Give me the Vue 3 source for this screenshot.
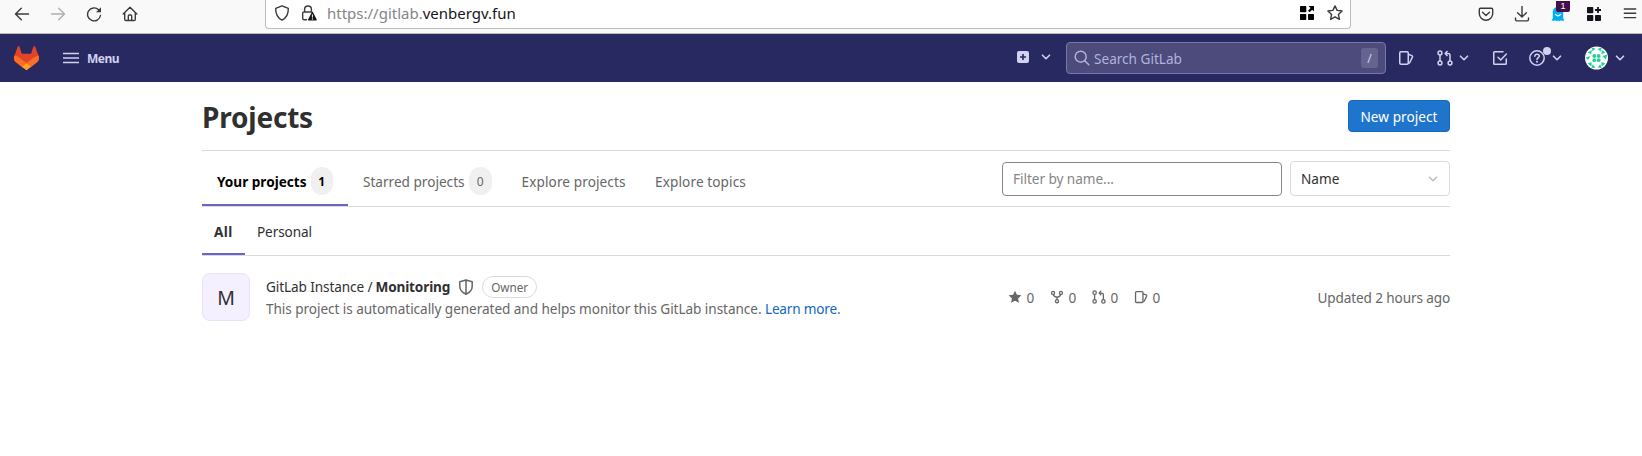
<script setup>
const tabs = [
  { label: 'Your projects', cls: 'tab-yours', count: 1, active: true },
  { label: 'Starred projects', cls: 'tab-starred', count: 0 },
  { label: 'Explore projects', cls: 'tab-explore' },
  { label: 'Explore topics', cls: 'tab-explore' },
]
const stats = [
  { icon: 'star-fill', value: 0 },
  { icon: 'fork', value: 0 },
  { icon: 'merge', value: 0 },
  { icon: 'issues', value: 0 },
]
</script>

<template>
  <div class="page">
    <svg class="sprite" aria-hidden="true">
      <symbol id="chevron" viewBox="0 0 12 12"><path d="M2.5 4.2 6 7.7l3.5-3.5" fill="none" stroke="currentColor" stroke-width="1.6" stroke-linecap="round" stroke-linejoin="round" /></symbol>
      <symbol id="merge" viewBox="0 0 16 16">
        <g fill="none" stroke="currentColor" stroke-width="1.5">
          <circle cx="3" cy="3" r="1.9" /><circle cx="3" cy="13" r="1.9" /><circle cx="13" cy="13" r="1.9" />
          <path d="M3 5v6M13 11V5.500a2 2 0 0 0-2-2H8.500" /><path d="M10.500 1 8.200 3.500l2.300 2.500" stroke-linejoin="round" />
        </g>
      </symbol>
      <symbol id="issues" viewBox="0 0 16 16">
        <g fill="none" stroke="currentColor" stroke-width="1.5" stroke-linejoin="round">
          <rect x="1.750" y="1.750" width="8.500" height="12.500" rx="1.200" />
          <path d="M10.300 4.300l3.600 1.300c.6.250.8.700.6 1.300l-2.700 5.600c-.25.550-.7.800-1.400.800" />
        </g>
      </symbol>
      <symbol id="fork" viewBox="0 0 16 16">
        <g fill="none" stroke="currentColor" stroke-width="1.5">
          <circle cx="3.500" cy="3.300" r="1.750" /><circle cx="12.500" cy="3.300" r="1.750" /><circle cx="8" cy="12.800" r="1.750" />
          <path d="M3.800 5c.3 2 1.700 3 4.200 3.300C10.500 8 11.900 7 12.200 5M8 8v3" />
        </g>
      </symbol>
      <symbol id="star-fill" viewBox="0 0 16 16"><path d="M8 .8l2.200 4.700 5.100.6-3.800 3.500 1 5.100L8 12.200l-4.500 2.500 1-5.100L.7 6.100l5.100-.6z" fill="currentColor" /></symbol>
    </svg>

    <div class="toolbar">
      <div class="nav-buttons">
        <svg width="16" height="16" viewBox="0 0 16 16" class="line"><path d="M14.500 8H1.800M7.300 2.200 1.500 8l5.800 5.800" /></svg>
        <svg width="16" height="16" viewBox="0 0 16 16" class="line off"><path d="M1.500 8h12.700M8.700 2.200 14.500 8l-5.800 5.800" /></svg>
        <svg width="16" height="16" viewBox="0 0 16 16" class="line"><path d="M14.500 9.500A6.500 6.500 0 1 1 12.600 3.700" /><path d="M15 1.200v5H10z" fill="currentColor" stroke="none" /></svg>
        <svg width="16" height="16" viewBox="0 0 16 16" class="line"><path d="M1.200 8 8 1.300 14.800 8M2.700 7v6.300c0 .8.400 1.200 1.200 1.200h8.200c.8 0 1.200-.4 1.200-1.200V7M6.300 14.300V10c0-.7.300-1 1-1h1.400c.7 0 1 .3 1 1v4.300" /></svg>
      </div>
      <div class="address">
        <svg width="16" height="16" viewBox="0 0 16 16" class="line"><path d="M8 .9 14.300 3.300c.2 5.200-1.300 9.300-6.300 11.900C3 12.600 1.500 8.500 1.700 3.300z" /></svg>
        <svg class="lock line" width="16" height="16" viewBox="0 0 16 16"><path d="M5.500 14.800H3c-.9 0-1.300-.5-1.300-1.300V8.300C1.700 7.400 2.200 7 3 7h7.500M3.600 7V4.400a3.400 3.400 0 0 1 6.800 0V7" /><path d="M10.800 7.200c.3-.6.900-.6 1.200 0l3.700 7.200c.3.500 0 1-.6 1H7.700c-.6 0-.9-.5-.6-1z" fill="#15141a" stroke="none" /><path d="M11.400 9.800v2.400M11.400 13.700v.5" stroke="#fff" stroke-width="1" /></svg>
        <span class="url"><span class="dim">https://gitlab.</span>venbergv.fun</span>
        <svg class="push" width="16" height="16" viewBox="0 0 16 16"><path d="M1.800 1h4.700q.8 0 .8.800v4.700q0 .8-.8.800H1.800q-.8 0-.8-.8V1.800Q1 1 1.800 1zM1.800 9h4.700q.8 0 .8.800v4.400q0 .8-.8.800H1.800q-.8 0-.8-.8V9.800q0-.8.800-.8zM9.800 9h4.400q.8 0 .8.800v4.400q0 .8-.8.800H9.800q-.8 0-.8-.8V9.800q0-.8.800-.8zM9.500 1H15v5.500l-1.800-1.800-2.600 2.600L9 5.700l2.500-2.600z" fill="#000" /></svg>
        <svg class="fav line" width="16" height="16" viewBox="0 0 16 16"><path d="M8 .9l2.100 4.500 5 .6-3.700 3.400 1 5L8 11.900l-4.400 2.500 1-5L.9 6l5-.6z" /></svg>
      </div>
      <div class="extensions">
        <svg width="16" height="16" viewBox="0 0 16 16" class="line"><path d="M2.500 2.200h11c.8 0 1.200.4 1.200 1.200v4.100a6.700 6.700 0 0 1-13.400 0V3.400c0-.8.400-1.200 1.200-1.200zM4.500 6.200 8 9.500l3.500-3.300" /></svg>
        <svg width="16" height="16" viewBox="0 0 16 16" class="line"><path d="M8 .5v10.300M3.600 6.700 8 11l4.400-4.300M1.500 12v1.500c0 1 .5 1.400 1.400 1.400h10.200c.9 0 1.400-.4 1.400-1.400V12" /></svg>
        <span class="ghost">
          <svg width="16" height="16" viewBox="0 0 16 16"><path d="M2.800 12.500V6a5.200 5.200 0 0 1 10.400 0v6.500l1.300 1.700-2 .9-1.600-.8-1.400.9L8 14.400l-1.500.8-1.400-.9-1.600.8-2-.9z" fill="#00aef0" /><path d="M5.200 8.200q2.800 3.300 5.600 0" fill="none" stroke="#fff" stroke-width="1.200" /></svg>
          <span class="count">1</span>
        </span>
        <svg width="16" height="16" viewBox="0 0 16 16"><path d="M1.800 1h4.700q.8 0 .8.800v4.700q0 .8-.8.800H1.800q-.8 0-.8-.8V1.800Q1 1 1.800 1zM1.800 9h4.700q.8 0 .8.800v4.400q0 .8-.8.800H1.800q-.8 0-.8-.8V9.800q0-.8.800-.8zM9.800 9h4.400q.8 0 .8.800v4.400q0 .8-.8.800H9.800q-.8 0-.8-.8V9.800q0-.8.800-.8zM11.100 1h1.800v2.100H15v1.800h-2.100V7h-1.800V4.900H9V3.100h2.100z" fill="#15141a" /></svg>
        <svg width="16" height="16" viewBox="0 0 16 16" class="line"><path d="M2.300 3h11.400M2.300 7.300h11.400M2.300 11.600h11.400" /></svg>
      </div>
    </div>

    <header class="navbar">
      <svg class="logo" width="25" height="24" viewBox="0 0 25 24">
        <path d="m24.507 9.500-.034-.09L21.082.562a.896.896 0 0 0-1.694.091l-2.290 7.010H7.825L5.535.653a.898.898 0 0 0-1.694-.09L.451 9.411.416 9.500a6.297 6.297 0 0 0 2.090 7.278l.012.010.030.022 5.160 3.867 2.560 1.935 1.554 1.176a1.051 1.051 0 0 0 1.268 0l1.555-1.176 2.560-1.935 5.197-3.890.014-.010A6.297 6.297 0 0 0 24.507 9.500Z" fill="#E24329" />
        <path d="m24.507 9.500-.034-.09a11.440 11.440 0 0 0-4.560 2.051l-7.447 5.632 4.742 3.584 5.197-3.890.014-.010A6.297 6.297 0 0 0 24.507 9.500Z" fill="#FC6D26" />
        <path d="m7.707 20.677 2.560 1.935 1.555 1.176a1.051 1.051 0 0 0 1.268 0l1.555-1.176 2.560-1.935-4.743-3.584-4.755 3.584Z" fill="#FCA326" />
        <path d="M5.010 11.461a11.430 11.430 0 0 0-4.560-2.050L.416 9.500a6.297 6.297 0 0 0 2.090 7.278l.012.010.030.022 5.160 3.867 4.745-3.584-7.444-5.632Z" fill="#FC6D26" />
      </svg>
      <svg class="burger" width="16" height="12" viewBox="0 0 16 12"><path d="M0 1.500h16M0 6h16M0 10.500h16" stroke="currentColor" stroke-width="1.4" /></svg>
      <span class="menu">Menu</span>
      <svg class="plus" width="12" height="12" viewBox="0 0 12 12"><rect width="12" height="12" rx="2" fill="currentColor" /><path d="M6 3v6M3 6h6" stroke="#292961" stroke-width="1.600" /></svg>
      <svg class="chev create"><use href="#chevron" /></svg>
      <div class="search">
        <svg class="lens" width="16" height="16" viewBox="0 0 16 16"><g fill="none" stroke="currentColor" stroke-width="1.500"><circle cx="6.700" cy="6.700" r="5.500" /><path d="M10.700 10.700 14.800 14.800" stroke-linecap="round" /></g></svg>
        <span class="search-text">Search GitLab</span>
        <kbd class="key">/</kbd>
      </div>
      <svg class="ic issues"><use href="#issues" /></svg>
      <svg class="ic mr"><use href="#merge" /></svg>
      <svg class="chev mr-chev"><use href="#chevron" /></svg>
      <svg class="ic todo" viewBox="0 0 16 16"><g fill="none" stroke="currentColor" stroke-width="1.500" stroke-linecap="round" stroke-linejoin="round"><path d="M11 1.750H2.500a.75.750 0 0 0-.75.750v11c0 .4.350.750.750.750h11a.75.750 0 0 0 .75-.75V9" /><path d="M6 7.300l2.700 2.700 5.700-6" /></g></svg>
      <span class="help">
        <svg class="ic" viewBox="0 0 16 16"><g fill="none" stroke="currentColor" stroke-width="1.500"><circle cx="8" cy="8" r="7.200" /><path d="M5.800 6.200C5.900 4.900 6.800 4.200 8 4.200s2.300.7 2.300 1.900c0 1.600-2.300 1.600-2.300 3.400" stroke-linecap="round" /></g><circle cx="8" cy="11.800" r="1" fill="currentColor" /></svg>
        <i class="dot"></i>
      </span>
      <svg class="chev help-chev"><use href="#chevron" /></svg>
      <svg class="user" width="24" height="24" viewBox="0 0 24 24">
        <circle cx="11.500" cy="12" r="11.500" fill="#fff" />
        <g fill="#24cf94">
          <circle cx="9.300" cy="10" r="1.900" /><circle cx="13.700" cy="10" r="1.900" /><circle cx="9.300" cy="14.200" r="1.900" /><circle cx="13.700" cy="14.200" r="1.900" />
          <path d="M6.500 1.500l4 1-2.800 2.700zM12.500 2.800l4.500-1.300-1.500 4zM2.500 6.500 6.800 4l-.6 4.200zM16.500 4l4 2.500-3.800 1.800zM.5 11.500l5-1.500-2.500 3.800zM17.500 10l5-1.500-1.800 5.300zM2.500 17.500l4-1.500.2 4.400zM16.500 16l4 1.500-4 2.900zM6.500 22l1.200-3.800 2.800 3.500zM12.500 21.500l2.800-3.300 1.200 3.800z" />
        </g>
      </svg>
      <svg class="chev user-chev"><use href="#chevron" /></svg>
    </header>

    <main class="content">
      <div class="title-row">
        <h1>Projects</h1>
        <button class="new-project">New project</button>
      </div>
      <div class="tab-row">
        <nav class="tabs">
          <a v-for="tab in tabs" :key="tab.label" class="tab" :class="[tab.cls, { active: tab.active }]">
            <span class="tab-label">{{ tab.label }}</span>
            <span v-if="tab.count !== undefined" class="badge">{{ tab.count }}</span>
          </a>
        </nav>
        <div class="controls">
          <div class="filter">Filter by name...</div>
          <div class="sort"><span class="sort-label">Name</span><svg class="chev"><use href="#chevron" /></svg></div>
        </div>
      </div>
      <nav class="subtabs">
        <a class="subtab active">All</a>
        <a class="subtab">Personal</a>
      </nav>
      <article class="project">
        <div class="avatar">M</div>
        <div class="info">
          <div class="name-row">
            <span class="ns">GitLab Instance /</span>
            <strong class="name">Monitoring</strong>
            <svg class="shield" width="16" height="16" viewBox="0 0 16 16"><path d="M8 1 14.200 2.800v4.700c0 3.300-2.200 5.800-6.200 7.700-4-1.900-6.200-4.400-6.200-7.700V2.800zM8 1v14" fill="none" stroke="currentColor" stroke-width="1.500" stroke-linejoin="round" /></svg>
            <span class="role">Owner</span>
          </div>
          <p class="desc">This project is automatically generated and helps monitor this GitLab instance. <a>Learn more</a>.</p>
        </div>
        <div class="stats">
          <span v-for="s in stats" :key="s.icon" class="stat"><svg><use :href="'#' + s.icon" /></svg><span>{{ s.value }}</span></span>
        </div>
        <div class="updated">Updated 2 hours ago</div>
      </article>
    </main>
  </div>
</template>

<style>
body { margin: 0; background: #fff; }
</style>

<style scoped>
.page { width: 1642px; height: 456px; overflow: hidden; font-family: "Noto Sans", "Open Sans", sans-serif; font-size: 13.6px; color: #303030; white-space: nowrap; line-height: 20px; }
.page * { box-sizing: border-box; }
.sprite { position: absolute; width: 0; height: 0; }
svg { display: block; flex: none; }
.line { fill: none; stroke: currentColor; stroke-width: 1.4; stroke-linecap: round; stroke-linejoin: round; color: #3a3a40; }
.off { color: #b0b0b0; }
.toolbar { display: flex; height: 34px; background: #f9f9fa; border-bottom: 1px solid #b8bab8; }
.nav-buttons { display: flex; align-items: center; gap: 20px; width: 265px; height: 27px; padding-left: 14px; }
.address { display: flex; align-items: center; width: 1086px; height: 29px; padding: 0 7px 2px 8px; background: #fff; border: 1px solid #bdbdbd; border-top: 0; border-radius: 0 0 4px 4px; }
.lock { margin-left: 11px; }
.url { margin-left: 10px; font-size: 15px; color: #15141a; }
.dim { color: #84848a; }
.push { margin-left: auto; }
.fav { margin-left: 12px; }
.extensions { display: flex; align-items: center; gap: 20px; height: 27px; margin-left: auto; padding-right: 4px; }
.ghost { position: relative; }
.count { position: absolute; left: 6px; top: -5px; width: 14px; height: 11px; border-radius: 0 0 2px 2px; background: #42104a; color: #fff; font: 9px/11px "Liberation Sans", sans-serif; text-align: center; }
.navbar { display: flex; align-items: center; height: 48px; padding: 0 16px 0 14px; background: #292961; color: #d1d1f0; }
.burger { margin-left: 24px; }
.menu { margin-left: 8px; padding-top: 2px; font-size: 12px; font-weight: 700; letter-spacing: -0.5px; }
.plus { margin: 0 0 2px auto; }
.chev { width: 12px; height: 12px; }
.ic { width: 16px; height: 16px; }
.create { margin-left: 11px; margin-bottom: 2px; }
.search { display: flex; align-items: center; width: 320px; height: 32px; margin-left: 14px; padding: 0 7px 0 7px; border: 1px solid #7777a8; border-radius: 4px; background: #4c4b7c; color: #b2b2dc; }
.search-text { margin-left: 4px; padding-top: 2px; }
.key { display: flex; align-items: center; justify-content: center; width: 17px; height: 20px; margin-left: auto; border-radius: 3px; background: #656490; color: #d1d1f0; font: 12px "Noto Sans", sans-serif; }
.issues { margin-left: 12px; }
.mr { margin-left: 23px; }
.mr-chev { margin-left: 5px; }
.todo { margin-left: 22px; }
.help { position: relative; margin-left: 21px; }
.dot { position: absolute; left: 14px; top: -3px; width: 8px; height: 8px; border-radius: 50%; background: #d1d1f0; }
.help-chev { margin-left: 6px; }
.user { margin-left: 22px; }
.user-chev { margin-left: 5px; }
.content { width: 1248px; margin: 0 auto 0 202px; }
.title-row { display: flex; align-items: center; justify-content: space-between; height: 69px; border-bottom: 1px solid #dbdbdb; }
h1 { margin: 0; padding-top: 2px; font-size: 28px; line-height: 36px; letter-spacing: -0.2px; }
.new-project { width: 102px; height: 32px; margin: 0; padding: 2px 0 0; border: 1px solid #1068bf; border-radius: 4px; background: #1f75cb; color: #fff; font: inherit; letter-spacing: 0.05px; }
.tab-row { display: flex; justify-content: space-between; height: 56px; border-bottom: 1px solid #dbdbdb; }
.tabs { display: flex; }
.tab { display: flex; align-items: center; height: 55px; padding: 7px 15px 0; border-bottom: 2px solid transparent; color: #666; }
.tab.active { border-bottom-color: #6666c4; color: #000; font-weight: 700; }
.tab-yours { width: 146px; }
.tab-explore { padding: 7px 14.5px 0 15px; letter-spacing: 0.1px; }
.tab-label { padding-top: 1px; }
.badge { display: flex; align-items: center; justify-content: center; width: 23px; height: 28px; margin-left: 4px; padding-top: 1px; border-radius: 12px; background: #f0f0f0; font-size: 12px; }
.controls { display: flex; align-items: flex-end; gap: 8px; padding-bottom: 10px; }
.filter { width: 280px; height: 34px; padding: 6px 10px; border: 1px solid #868686; border-radius: 4px; color: #868686; letter-spacing: -0.05px; }
.sort { display: flex; align-items: center; justify-content: space-between; width: 160px; height: 35px; padding: 0 10px; border: 1px solid #dbdbdb; border-radius: 4px; }
.sort .chev { color: #bfbfbf; }
.subtabs { display: flex; height: 49px; border-bottom: 1px solid #dbdbdb; }
.subtab { display: flex; align-items: center; height: 48px; padding: 4px 12px 0; border-bottom: 2px solid transparent; letter-spacing: -0.1px; }
.subtab.active { width: 43px; border-bottom-color: #6666c4; font-weight: 700; letter-spacing: 0.4px; }
.project { display: flex; height: 82px; padding-top: 17px; color: #666; }
.avatar { display: flex; align-items: center; justify-content: center; width: 48px; height: 48px; padding-top: 2px; border: 1px solid #e9e3f5; border-radius: 8px; background: #f4f0ff; color: #303030; font-size: 19.5px; }
.info { width: 742px; margin-left: 16px; }
.name-row { display: flex; align-items: center; height: 28px; color: #303030; }
.ns { letter-spacing: -0.1px; }
.name { margin-left: 3px; letter-spacing: -0.15px; }
.shield { margin-left: 8px; color: #666; }
.role { display: flex; align-items: center; justify-content: center; width: 55px; height: 22px; margin-left: 8px; border: 1px solid #dbdbdb; border-radius: 11px; color: #666; font-size: 11.7px; }
.desc { margin: -2px 0 0; letter-spacing: -0.06px; }
.desc a { color: #1068bf; letter-spacing: -0.2px; }
.stats { display: flex; height: 48px; align-items: center; }
.stat { display: flex; align-items: center; gap: 4.5px; width: 42px; }
.stat svg { width: 14px; height: 14px; }
.stat span { padding-top: 2px; }
.updated { margin-left: auto; padding-top: 1px; line-height: 48px; letter-spacing: -0.13px; }
</style>
